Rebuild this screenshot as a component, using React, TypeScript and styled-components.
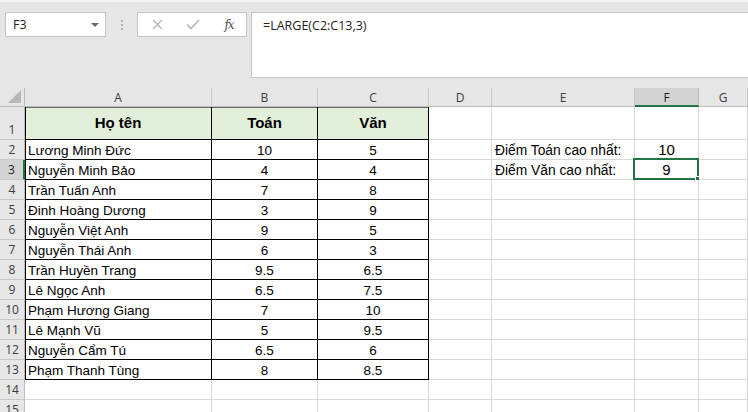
import React from "react";
import styled, { createGlobalStyle, css } from "styled-components";

const Global = createGlobalStyle`
  html, body { margin: 0; padding: 0; background: #ffffff; }
  body { width: 748px; height: 412px; overflow: hidden; font-family: "Liberation Sans", Arial, sans-serif; }
`;

const Page = styled.div`
  width: 748px;
  height: 412px;
  overflow: hidden;
  background: #ffffff;
  display: flex;
  flex-direction: column;
`;

const FormulaArea = styled.div`
  height: 88px;
  flex: none;
  background: #e6e6e6;
  border-top: 2px solid #f3f3f3;
  box-sizing: border-box;
  display: flex;
  align-items: flex-start;
  padding: 10px 0 0 5px;
`;

const NameBox = styled.div`
  width: 101px;
  height: 25px;
  box-sizing: border-box;
  background: #fff;
  border: 1px solid #c6c6c6;
  display: flex;
  align-items: center;
  justify-content: space-between;
  padding: 0 6px 0 7px;
  font-family: "Open Sans", "Liberation Sans", sans-serif;
  font-size: 12.5px;
  color: #222;
`;

const Caret = styled.span`
  width: 0;
  height: 0;
  border-left: 4px solid transparent;
  border-right: 4px solid transparent;
  border-top: 4px solid #6a6a6a;
`;

const Dots = styled.div`
  width: 31px;
  height: 25px;
  display: flex;
  flex-direction: column;
  align-items: center;
  justify-content: center;
  gap: 2px;
  & > span {
    width: 2px;
    height: 2px;
    background: #b3b3b3;
  }
`;

const FxBox = styled.div`
  width: 110px;
  height: 25px;
  box-sizing: border-box;
  background: #fff;
  border: 1px solid #c6c6c6;
  display: flex;
  align-items: center;
  padding: 0 0 0 12px;
`;

const IconSlot = styled.div<{ $w: number }>`
  width: ${(p) => p.$w}px;
  display: flex;
  align-items: center;
  justify-content: center;
`;

const Fx = styled.span`
  font-family: "DejaVu Serif", "Liberation Serif", serif;
  font-style: italic;
  font-size: 12px;
  color: #505050;
  letter-spacing: -1px;
`;

const FormulaInput = styled.div`
  margin-left: 4px;
  flex: 1;
  height: 66px;
  box-sizing: border-box;
  background: #fff;
  border: 1px solid #c6c6c6;
  border-right: none;
  padding: 4px 0 0 11px;
  font-family: "Open Sans", "Liberation Sans", sans-serif;
  font-size: 12.5px;
  color: #222;
`;

const Grid = styled.div`
  flex: 1;
  display: grid;
  grid-template-columns: 25px 187px 106px 111px 63px 143px 64px 1fr;
  grid-template-rows: 19px 33px repeat(14, 20px);
  overflow: hidden;
`;

const ColHead = styled.div<{ $active?: boolean }>`
  box-sizing: border-box;
  background: ${(p) => (p.$active ? "#d3d3d3" : "#e6e6e6")};
  border-right: 1px solid ${(p) => (p.$active ? "#bcbcbc" : "#c8c8c8")};
  border-bottom: ${(p) => (p.$active ? "2px solid #217346" : "1px solid #bcbcbc")};
  display: flex;
  align-items: center;
  justify-content: center;
  font-family: "Open Sans", "Liberation Sans", sans-serif;
  font-size: 12px;
  color: ${(p) => (p.$active ? "#1f1f1f" : "#3c3c3c")};
  padding-top: ${(p) => (p.$active ? "1px" : "0")};
`;

const Corner = styled.div`
  box-sizing: border-box;
  background: #e6e6e6;
  border-right: 1px solid #bcbcbc;
  border-bottom: 1px solid #bcbcbc;
  position: relative;
  &::after {
    content: "";
    position: absolute;
    right: 3px;
    bottom: 3px;
    width: 0;
    height: 0;
    border-left: 13px solid transparent;
    border-bottom: 13px solid #b7b7b7;
  }
`;

const RowHead = styled.div<{ $active?: boolean }>`
  box-sizing: border-box;
  background: ${(p) => (p.$active ? "#d3d3d3" : "#e6e6e6")};
  border-right: ${(p) => (p.$active ? "2px solid #217346" : "1px solid #bcbcbc")};
  border-bottom: 1px solid #c8c8c8;
  display: flex;
  align-items: flex-end;
  justify-content: center;
  padding-bottom: 1px;
  font-family: "Open Sans", "Liberation Sans", sans-serif;
  font-size: 12px;
  color: ${(p) => (p.$active ? "#1f1f1f" : "#3c3c3c")};
`;

const Cell = styled.div<{
  $align?: "left" | "center";
  $bold?: boolean;
  $fill?: boolean;
  $table?: boolean;
  $leftEdge?: boolean;
  $topEdge?: boolean;
  $size?: number;
}>`
  box-sizing: border-box;
  position: relative;
  background: ${(p) => (p.$fill ? "#e2efda" : "#fff")};
  border-right: 1px solid ${(p) => (p.$table ? "#000" : "#d9d9d9")};
  border-bottom: 1px solid ${(p) => (p.$table ? "#000" : "#d9d9d9")};
  display: flex;
  align-items: ${(p) => (p.$bold ? "center" : "flex-end")};
  justify-content: ${(p) => (p.$align === "center" ? "center" : "flex-start")};
  padding: 0 3px 1px 3px;
  font-family: "Liberation Sans", Arial, sans-serif;
  font-size: ${(p) => (p.$bold ? 15 : p.$size ?? 13.5)}px;
  font-weight: ${(p) => (p.$bold ? 700 : 400)};
  color: #000;
  white-space: nowrap;
  ${(p) =>
    (p.$leftEdge || p.$topEdge) &&
    css`
      box-shadow: ${[
        p.$leftEdge ? "inset 1px 0 0 #000" : "",
        p.$topEdge ? "inset 0 1px 0 #6a6a6a" : "",
      ]
        .filter(Boolean)
        .join(", ")};
    `}
`;

const Selection = styled.div`
  position: absolute;
  left: -2px;
  top: -2px;
  right: -1px;
  bottom: -1px;
  border: 2px solid #217346;
  pointer-events: none;
  &::after {
    content: "";
    position: absolute;
    right: -5px;
    bottom: -5px;
    width: 5px;
    height: 5px;
    background: #217346;
    border: 1px solid #fff;
  }
`;

const CellText = styled.span`
  position: relative;
  z-index: 1;
`;

const students: [string, string, string][] = [
  ["Lương Minh Đức", "10", "5"],
  ["Nguyễn Minh Bảo", "4", "4"],
  ["Trần Tuấn Anh", "7", "8"],
  ["Đinh Hoàng Dương", "3", "9"],
  ["Nguyễn Việt Anh", "9", "5"],
  ["Nguyễn Thái Anh", "6", "3"],
  ["Trần Huyền Trang", "9.5", "6.5"],
  ["Lê Ngọc Anh", "6.5", "7.5"],
  ["Phạm Hương Giang", "7", "10"],
  ["Lê Mạnh Vũ", "5", "9.5"],
  ["Nguyễn Cẩm Tú", "6.5", "6"],
  ["Phạm Thanh Tùng", "8", "8.5"],
];

const cols = ["A", "B", "C", "D", "E", "F", "G"];

export default function App() {
  const rows: React.ReactNode[] = [];

  rows.push(
    <React.Fragment key="r1">
      <RowHead>1</RowHead>
      <Cell $align="center" $bold $fill $table $leftEdge $topEdge>Họ tên</Cell>
      <Cell $align="center" $bold $fill $table $topEdge>Toán</Cell>
      <Cell $align="center" $bold $fill $table $topEdge>Văn</Cell>
      <Cell />
      <Cell />
      <Cell />
      <Cell />
    </React.Fragment>
  );

  for (let i = 0; i < 14; i++) {
    const r = i + 2;
    const s = students[i];
    let e: React.ReactNode = null;
    let f: React.ReactNode = null;
    if (r === 2) {
      e = "Điểm Toán cao nhất:";
      f = "10";
    } else if (r === 3) {
      e = "Điểm Văn cao nhất:";
      f = "9";
    }
    rows.push(
      <React.Fragment key={"r" + r}>
        <RowHead $active={r === 3}>{r}</RowHead>
        <Cell $table={!!s} $leftEdge={!!s}>{s ? s[0] : null}</Cell>
        <Cell $table={!!s} $align="center">{s ? s[1] : null}</Cell>
        <Cell $table={!!s} $align="center">{s ? s[2] : null}</Cell>
        <Cell />
        <Cell $size={13.8}>{e}</Cell>
        <Cell $size={15} $align="center">
          {r === 3 && <Selection />}
          <CellText>{f}</CellText>
        </Cell>
        <Cell />
      </React.Fragment>
    );
  }

  return (
    <Page>
      <Global />
      <FormulaArea>
        <NameBox>
          <span>F3</span>
          <Caret />
        </NameBox>
        <Dots>
          <span />
          <span />
          <span />
        </Dots>
        <FxBox>
          <IconSlot $w={14}>
            <svg width="11" height="11" viewBox="0 0 11 11">
              <path d="M1 1 L10 10 M10 1 L1 10" stroke="#b5b5b5" strokeWidth="1.4" fill="none" />
            </svg>
          </IconSlot>
          <IconSlot $w={58}>
            <svg width="14" height="11" viewBox="0 0 14 11">
              <path d="M1 5.5 L5 9.5 L13 1" stroke="#b5b5b5" strokeWidth="1.6" fill="none" />
            </svg>
          </IconSlot>
          <IconSlot $w={14}>
            <Fx>fx</Fx>
          </IconSlot>
        </FxBox>
        <FormulaInput>=LARGE(C2:C13,3)</FormulaInput>
      </FormulaArea>
      <Grid>
        <Corner />
        {cols.map((c) => (
          <ColHead key={c} $active={c === "F"}>{c}</ColHead>
        ))}
        {rows}
      </Grid>
    </Page>
  );
}
